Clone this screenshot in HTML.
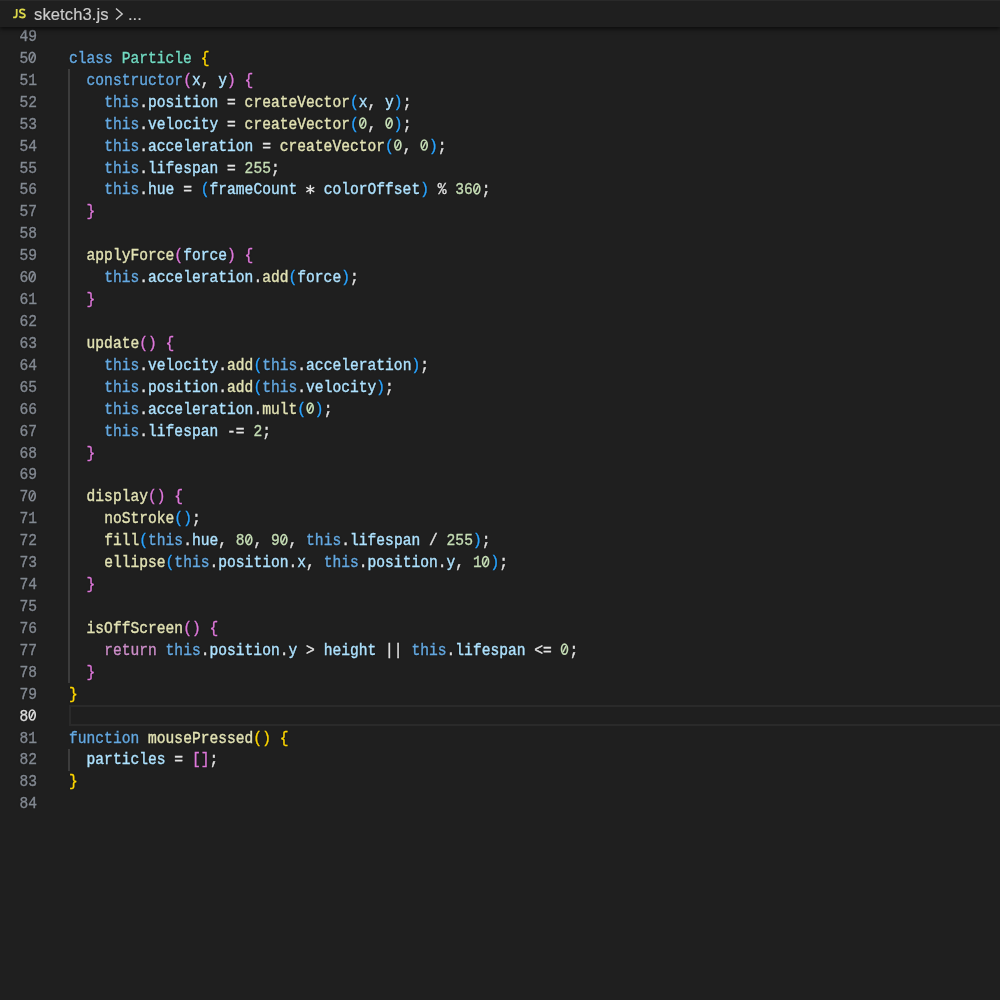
<!DOCTYPE html>
<html><head><meta charset="utf-8"><style>
html,body{margin:0;padding:0;}
body{width:1000px;height:1000px;overflow:hidden;background:#1f1f1f;position:relative;}
.ln,.cl{-webkit-text-stroke:0.35px currentColor;text-shadow:0 0 1.5px rgba(0,0,0,0.8);will-change:transform;}
.bc::before{content:'';position:absolute;left:0;top:0;width:1000px;height:1px;background:#292929;}
.bc .fn,.bc .dots{-webkit-text-stroke:0.15px currentColor;will-change:transform;}
.bc{position:absolute;left:0;top:0;width:1000px;height:27px;background:#1f1f1f;z-index:5;box-shadow:0 1.5px 4px #0c0c0c;}
.bc .js{position:absolute;left:13px;top:7.5px;font:11.5px "Liberation Sans",sans-serif;color:#cbcb41;letter-spacing:0.3px;}
.bc .fn{position:absolute;left:34px;top:5.1px;font:16.6px "Liberation Sans",sans-serif;color:#cccccc;letter-spacing:0.08px;}
.bc .chev{position:absolute;left:113px;top:6px;}
.bc .dots{position:absolute;left:128.3px;top:5.2px;font:16.6px "Liberation Sans",sans-serif;color:#cccccc;}
.ln,.cl{position:absolute;height:21.922px;line-height:21.922px;font-family:"Liberation Mono",monospace;font-size:14.6px;white-space:pre;}
.ln{left:0;width:37px;text-align:right;color:#838992;}
.ln.act{color:#dcdcdc;}
.cl{left:69px;letter-spacing:0.02px;}
.g{position:absolute;left:68px;width:1.5px;background:#3c3c3c;}
.cur{position:absolute;left:68.5px;right:-2px;border:2px solid #2a2a2a;box-sizing:border-box;}
.k{color:#64a8e0}.c{color:#72dac2}.f{color:#e2e2b4}.v{color:#aee2fe}.n{color:#c4dcb4}.p{color:#e2e2e2}.r{color:#cc8ec8}
.b1{color:#ffd700}.b2{color:#de78da}.b3{color:#2aa4ff}
.z{color:transparent!important;-webkit-text-stroke:0;text-shadow:none;}
.ast{color:transparent;-webkit-text-stroke:0;text-shadow:none;}
.cl,.ln{transform:scaleY(1.07);transform-origin:0 0px;}
</style></head><body>
<div class="bc"><svg class="jsi" width="40" height="27" viewBox="0 0 40 27" style="position:absolute;left:0;top:0"><path d="M16.7 9.1 V14.9 Q16.7 17.4 14.2 17.4 H13.1" stroke="#dcd84a" stroke-width="1.8" fill="none" stroke-linecap="butt"/><path d="M24.9 10.4 Q23.9 9.3 22.2 9.3 Q19.9 9.3 19.9 11.3 Q19.9 12.8 22.3 13.4 Q24.9 14.1 24.9 15.5 Q24.9 17.5 22.3 17.5 Q20.4 17.5 19.3 16.3" stroke="#dcd84a" stroke-width="1.8" fill="none"/></svg><span class="fn">sketch3.js</span><svg class="chev" width="12" height="16" viewBox="0 0 12 16"><path d="M3 2.4 L9.2 8 L3 13.6" stroke="#cccccc" stroke-width="1.4" fill="none"/></svg><span class="dots">...</span></div>
<div class="cur" style="top:705.002px;height:21.008px"></div>
<div class="g" style="top:69.144px;height:613.816px"></div><div class="g" style="top:748.726px;height:21.922px"></div>
<div class="ln" style="top:26.000px">49</div><div class="cl" style="top:26.000px"></div><div class="ln" style="top:47.922px">5<span class="z">0</span></div><div class="cl" style="top:47.922px"><span class="k">class</span> <span class="c">Particle</span> <span class="b1">{</span></div><div class="ln" style="top:69.844px">51</div><div class="cl" style="top:69.844px">  <span class="k">constructor</span><span class="b2">(</span><span class="v">x</span><span class="p">,</span> <span class="v">y</span><span class="b2">)</span> <span class="b2">{</span></div><div class="ln" style="top:91.766px">52</div><div class="cl" style="top:91.766px">    <span class="k">this</span><span class="p">.</span><span class="v">position</span> <span class="p">=</span> <span class="f">createVector</span><span class="b3">(</span><span class="v">x</span><span class="p">,</span> <span class="v">y</span><span class="b3">)</span><span class="p">;</span></div><div class="ln" style="top:113.688px">53</div><div class="cl" style="top:113.688px">    <span class="k">this</span><span class="p">.</span><span class="v">velocity</span> <span class="p">=</span> <span class="f">createVector</span><span class="b3">(</span><span class="n"><span class="z">0</span></span><span class="p">,</span> <span class="n"><span class="z">0</span></span><span class="b3">)</span><span class="p">;</span></div><div class="ln" style="top:135.610px">54</div><div class="cl" style="top:135.610px">    <span class="k">this</span><span class="p">.</span><span class="v">acceleration</span> <span class="p">=</span> <span class="f">createVector</span><span class="b3">(</span><span class="n"><span class="z">0</span></span><span class="p">,</span> <span class="n"><span class="z">0</span></span><span class="b3">)</span><span class="p">;</span></div><div class="ln" style="top:157.532px">55</div><div class="cl" style="top:157.532px">    <span class="k">this</span><span class="p">.</span><span class="v">lifespan</span> <span class="p">=</span> <span class="n">255</span><span class="p">;</span></div><div class="ln" style="top:179.454px">56</div><div class="cl" style="top:179.454px">    <span class="k">this</span><span class="p">.</span><span class="v">hue</span> <span class="p">=</span> <span class="b3">(</span><span class="v">frameCount</span> <span class="p ast">*</span> <span class="v">colorOffset</span><span class="b3">)</span> <span class="p">%</span> <span class="n">36<span class="z">0</span></span><span class="p">;</span></div><div class="ln" style="top:201.376px">57</div><div class="cl" style="top:201.376px">  <span class="b2">}</span></div><div class="ln" style="top:223.298px">58</div><div class="cl" style="top:223.298px"></div><div class="ln" style="top:245.220px">59</div><div class="cl" style="top:245.220px">  <span class="f">applyForce</span><span class="b2">(</span><span class="v">force</span><span class="b2">)</span> <span class="b2">{</span></div><div class="ln" style="top:267.142px">6<span class="z">0</span></div><div class="cl" style="top:267.142px">    <span class="k">this</span><span class="p">.</span><span class="v">acceleration</span><span class="p">.</span><span class="f">add</span><span class="b3">(</span><span class="v">force</span><span class="b3">)</span><span class="p">;</span></div><div class="ln" style="top:289.064px">61</div><div class="cl" style="top:289.064px">  <span class="b2">}</span></div><div class="ln" style="top:310.986px">62</div><div class="cl" style="top:310.986px"></div><div class="ln" style="top:332.908px">63</div><div class="cl" style="top:332.908px">  <span class="f">update</span><span class="b2">(</span><span class="b2">)</span> <span class="b2">{</span></div><div class="ln" style="top:354.830px">64</div><div class="cl" style="top:354.830px">    <span class="k">this</span><span class="p">.</span><span class="v">velocity</span><span class="p">.</span><span class="f">add</span><span class="b3">(</span><span class="k">this</span><span class="p">.</span><span class="v">acceleration</span><span class="b3">)</span><span class="p">;</span></div><div class="ln" style="top:376.752px">65</div><div class="cl" style="top:376.752px">    <span class="k">this</span><span class="p">.</span><span class="v">position</span><span class="p">.</span><span class="f">add</span><span class="b3">(</span><span class="k">this</span><span class="p">.</span><span class="v">velocity</span><span class="b3">)</span><span class="p">;</span></div><div class="ln" style="top:398.674px">66</div><div class="cl" style="top:398.674px">    <span class="k">this</span><span class="p">.</span><span class="v">acceleration</span><span class="p">.</span><span class="f">mult</span><span class="b3">(</span><span class="n"><span class="z">0</span></span><span class="b3">)</span><span class="p">;</span></div><div class="ln" style="top:420.596px">67</div><div class="cl" style="top:420.596px">    <span class="k">this</span><span class="p">.</span><span class="v">lifespan</span> <span class="p">-=</span> <span class="n">2</span><span class="p">;</span></div><div class="ln" style="top:442.518px">68</div><div class="cl" style="top:442.518px">  <span class="b2">}</span></div><div class="ln" style="top:464.440px">69</div><div class="cl" style="top:464.440px"></div><div class="ln" style="top:486.362px">7<span class="z">0</span></div><div class="cl" style="top:486.362px">  <span class="f">display</span><span class="b2">(</span><span class="b2">)</span> <span class="b2">{</span></div><div class="ln" style="top:508.284px">71</div><div class="cl" style="top:508.284px">    <span class="f">noStroke</span><span class="b3">(</span><span class="b3">)</span><span class="p">;</span></div><div class="ln" style="top:530.206px">72</div><div class="cl" style="top:530.206px">    <span class="f">fill</span><span class="b3">(</span><span class="k">this</span><span class="p">.</span><span class="v">hue</span><span class="p">,</span> <span class="n">8<span class="z">0</span></span><span class="p">,</span> <span class="n">9<span class="z">0</span></span><span class="p">,</span> <span class="k">this</span><span class="p">.</span><span class="v">lifespan</span> <span class="p">/</span> <span class="n">255</span><span class="b3">)</span><span class="p">;</span></div><div class="ln" style="top:552.128px">73</div><div class="cl" style="top:552.128px">    <span class="f">ellipse</span><span class="b3">(</span><span class="k">this</span><span class="p">.</span><span class="v">position</span><span class="p">.</span><span class="v">x</span><span class="p">,</span> <span class="k">this</span><span class="p">.</span><span class="v">position</span><span class="p">.</span><span class="v">y</span><span class="p">,</span> <span class="n">1<span class="z">0</span></span><span class="b3">)</span><span class="p">;</span></div><div class="ln" style="top:574.050px">74</div><div class="cl" style="top:574.050px">  <span class="b2">}</span></div><div class="ln" style="top:595.972px">75</div><div class="cl" style="top:595.972px"></div><div class="ln" style="top:617.894px">76</div><div class="cl" style="top:617.894px">  <span class="f">isOffScreen</span><span class="b2">(</span><span class="b2">)</span> <span class="b2">{</span></div><div class="ln" style="top:639.816px">77</div><div class="cl" style="top:639.816px">    <span class="r">return</span> <span class="k">this</span><span class="p">.</span><span class="v">position</span><span class="p">.</span><span class="v">y</span> <span class="p">&gt;</span> <span class="v">height</span> <span class="p">||</span> <span class="k">this</span><span class="p">.</span><span class="v">lifespan</span> <span class="p">&lt;=</span> <span class="n"><span class="z">0</span></span><span class="p">;</span></div><div class="ln" style="top:661.738px">78</div><div class="cl" style="top:661.738px">  <span class="b2">}</span></div><div class="ln" style="top:683.660px">79</div><div class="cl" style="top:683.660px"><span class="b1">}</span></div><div class="ln act" style="top:705.582px">8<span class="z">0</span></div><div class="cl" style="top:705.582px"></div><div class="ln" style="top:727.504px">81</div><div class="cl" style="top:727.504px"><span class="k">function</span> <span class="f">mousePressed</span><span class="b1">(</span><span class="b1">)</span> <span class="b1">{</span></div><div class="ln" style="top:749.426px">82</div><div class="cl" style="top:749.426px">  <span class="v">particles</span> <span class="p">=</span> <span class="b2">[</span><span class="b2">]</span><span class="p">;</span></div><div class="ln" style="top:771.348px">83</div><div class="cl" style="top:771.348px"><span class="b1">}</span></div><div class="ln" style="top:793.270px">84</div><div class="cl" style="top:793.270px"></div>
<svg width="1000" height="1000" style="position:absolute;left:0;top:0"><path d="M310.30 185.60 L310.30 193.60 M306.84 187.60 L313.76 191.60 M306.84 191.60 L313.76 187.60 " stroke="#e2e2e2" stroke-width="1.5" stroke-linecap="round" fill="none"/></svg>
<svg width="1000" height="1000" style="position:absolute;left:0;top:0"><ellipse cx="32.20" cy="57.32" rx="3.0" ry="5.0" stroke="#838992" stroke-width="1.7" fill="none"/><path d="M33.70 54.32 L30.70 60.32" stroke="#838992" stroke-width="1.6"/><ellipse cx="362.79" cy="123.09" rx="3.0" ry="5.0" stroke="#c4dcb4" stroke-width="1.7" fill="none"/><path d="M364.29 120.09 L361.29 126.09" stroke="#c4dcb4" stroke-width="1.6"/><ellipse cx="389.10" cy="123.09" rx="3.0" ry="5.0" stroke="#c4dcb4" stroke-width="1.7" fill="none"/><path d="M390.60 120.09 L387.60 126.09" stroke="#c4dcb4" stroke-width="1.6"/><ellipse cx="397.88" cy="145.01" rx="3.0" ry="5.0" stroke="#c4dcb4" stroke-width="1.7" fill="none"/><path d="M399.38 142.01 L396.38 148.01" stroke="#c4dcb4" stroke-width="1.6"/><ellipse cx="424.18" cy="145.01" rx="3.0" ry="5.0" stroke="#c4dcb4" stroke-width="1.7" fill="none"/><path d="M425.68 142.01 L422.68 148.01" stroke="#c4dcb4" stroke-width="1.6"/><ellipse cx="476.80" cy="188.85" rx="3.0" ry="5.0" stroke="#c4dcb4" stroke-width="1.7" fill="none"/><path d="M478.30 185.85 L475.30 191.85" stroke="#c4dcb4" stroke-width="1.6"/><ellipse cx="32.20" cy="276.54" rx="3.0" ry="5.0" stroke="#838992" stroke-width="1.7" fill="none"/><path d="M33.70 273.54 L30.70 279.54" stroke="#838992" stroke-width="1.6"/><ellipse cx="310.17" cy="408.07" rx="3.0" ry="5.0" stroke="#c4dcb4" stroke-width="1.7" fill="none"/><path d="M311.67 405.07 L308.67 411.07" stroke="#c4dcb4" stroke-width="1.6"/><ellipse cx="32.20" cy="495.76" rx="3.0" ry="5.0" stroke="#838992" stroke-width="1.7" fill="none"/><path d="M33.70 492.76 L30.70 498.76" stroke="#838992" stroke-width="1.6"/><ellipse cx="248.78" cy="539.61" rx="3.0" ry="5.0" stroke="#c4dcb4" stroke-width="1.7" fill="none"/><path d="M250.28 536.61 L247.28 542.61" stroke="#c4dcb4" stroke-width="1.6"/><ellipse cx="283.87" cy="539.61" rx="3.0" ry="5.0" stroke="#c4dcb4" stroke-width="1.7" fill="none"/><path d="M285.37 536.61 L282.37 542.61" stroke="#c4dcb4" stroke-width="1.6"/><ellipse cx="485.57" cy="561.53" rx="3.0" ry="5.0" stroke="#c4dcb4" stroke-width="1.7" fill="none"/><path d="M487.07 558.53 L484.07 564.53" stroke="#c4dcb4" stroke-width="1.6"/><ellipse cx="564.50" cy="649.22" rx="3.0" ry="5.0" stroke="#c4dcb4" stroke-width="1.7" fill="none"/><path d="M566.00 646.22 L563.00 652.22" stroke="#c4dcb4" stroke-width="1.6"/><ellipse cx="32.20" cy="714.98" rx="3.0" ry="5.0" stroke="#dcdcdc" stroke-width="1.7" fill="none"/><path d="M33.70 711.98 L30.70 717.98" stroke="#dcdcdc" stroke-width="1.6"/></svg>
</body></html>
